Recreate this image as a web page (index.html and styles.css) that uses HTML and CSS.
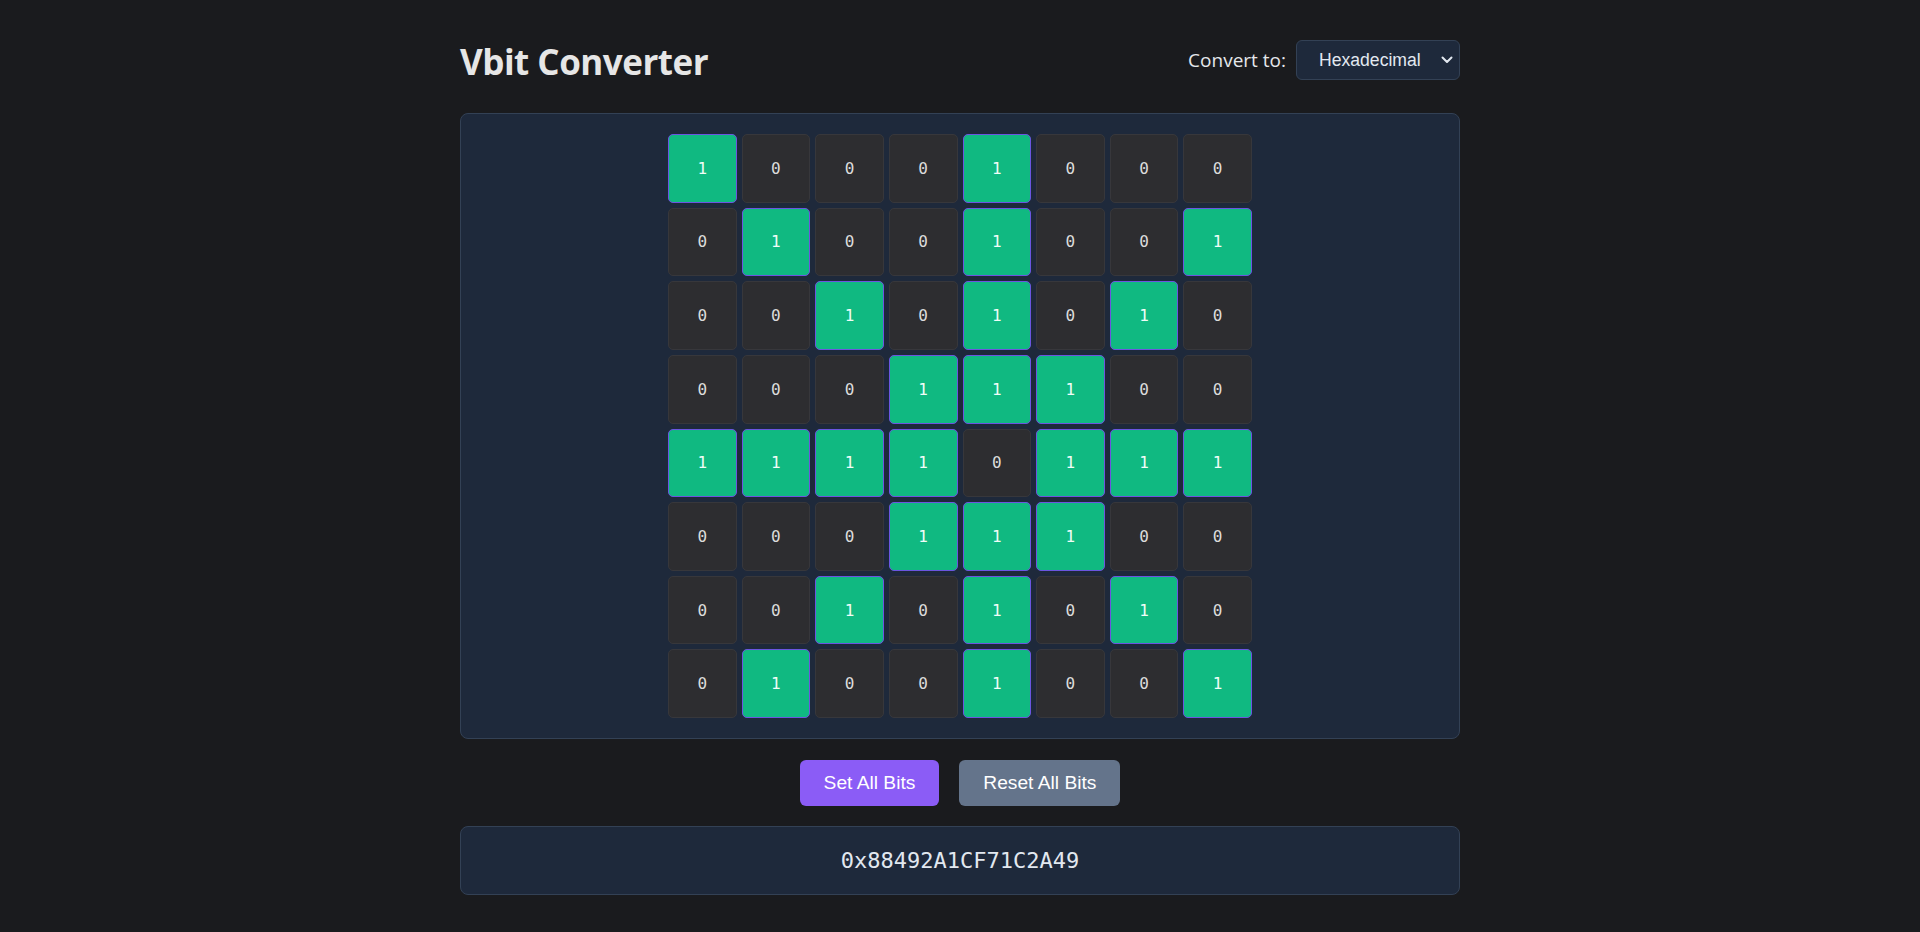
FILE: index.html
```html
<!DOCTYPE html>
<html lang="en">
<head>
<meta charset="utf-8">
<title>Vbit Converter</title>
<link rel="stylesheet" href="styles.css">
</head>
<body>
<div class="app">
  <header class="header">
    <h1 class="title">Vbit Converter</h1>
    <div class="convert">
      <label class="convert-label" for="fmt">Convert to:</label>
      <div class="select-wrap">
        <select id="fmt" class="select">
          <option>Hexadecimal</option>
          <option>Decimal</option>
          <option>Binary</option>
        </select>
        <svg class="chevron" width="12" height="8" viewBox="0 0 12 8" aria-hidden="true"><path d="M1.5 1.5 L6 6 L10.5 1.5" fill="none" stroke="#e2e8f0" stroke-width="2" stroke-linecap="round" stroke-linejoin="round"/></svg>
      </div>
    </div>
  </header>

  <section class="panel">
    <div class="grid">
      <div class="cell on">1</div><div class="cell">0</div><div class="cell">0</div><div class="cell">0</div><div class="cell on">1</div><div class="cell">0</div><div class="cell">0</div><div class="cell">0</div>
      <div class="cell">0</div><div class="cell on">1</div><div class="cell">0</div><div class="cell">0</div><div class="cell on">1</div><div class="cell">0</div><div class="cell">0</div><div class="cell on">1</div>
      <div class="cell">0</div><div class="cell">0</div><div class="cell on">1</div><div class="cell">0</div><div class="cell on">1</div><div class="cell">0</div><div class="cell on">1</div><div class="cell">0</div>
      <div class="cell">0</div><div class="cell">0</div><div class="cell">0</div><div class="cell on">1</div><div class="cell on">1</div><div class="cell on">1</div><div class="cell">0</div><div class="cell">0</div>
      <div class="cell on">1</div><div class="cell on">1</div><div class="cell on">1</div><div class="cell on">1</div><div class="cell">0</div><div class="cell on">1</div><div class="cell on">1</div><div class="cell on">1</div>
      <div class="cell">0</div><div class="cell">0</div><div class="cell">0</div><div class="cell on">1</div><div class="cell on">1</div><div class="cell on">1</div><div class="cell">0</div><div class="cell">0</div>
      <div class="cell">0</div><div class="cell">0</div><div class="cell on">1</div><div class="cell">0</div><div class="cell on">1</div><div class="cell">0</div><div class="cell on">1</div><div class="cell">0</div>
      <div class="cell">0</div><div class="cell on">1</div><div class="cell">0</div><div class="cell">0</div><div class="cell on">1</div><div class="cell">0</div><div class="cell">0</div><div class="cell on">1</div>
    </div>
  </section>

  <div class="actions">
    <button class="btn btn-set" type="button">Set All Bits</button>
    <button class="btn btn-reset" type="button">Reset All Bits</button>
  </div>

  <div class="output">0x88492A1CF71C2A49</div>
</div>
</body>
</html>
```

FILE: styles.css
```css
html, body {
  margin: 0;
  padding: 0;
}

body {
  background: #1a1b1e;
  color: #e5e7eb;
  font-family: "Open Sans", "Noto Sans", "Liberation Sans", sans-serif;
}

.app {
  width: 1000px;
  margin: 0 auto;
  padding-top: 38px;
}

.header {
  display: flex;
  justify-content: space-between;
  align-items: center;
  height: 44px;
  margin-bottom: 31px;
}

.title {
  margin: 0;
  font-size: 35px;
  line-height: 44px;
  font-weight: 700;
  color: #e6e6e6;
  letter-spacing: -0.5px;
  position: relative;
  top: 2px;
}

.convert {
  display: flex;
  align-items: center;
  gap: 10px;
}

.convert-label {
  font-size: 19px;
  color: #e5e7eb;
}

.select-wrap {
  position: relative;
}

.select {
  appearance: none;
  -webkit-appearance: none;
  width: 164px;
  height: 40px;
  padding: 0 30px 0 22px;
  background: #1e293b;
  color: #e2e8f0;
  border: 1px solid #334155;
  border-radius: 6px;
  font-family: "Liberation Sans", Arial, sans-serif;
  font-size: 17.6px;
  display: block;
}

.chevron {
  position: absolute;
  right: 7px;
  top: 16px;
  pointer-events: none;
}

.panel {
  background: #1e293b;
  border: 1px solid #334155;
  border-radius: 8px;
  padding: 20px;
  display: flex;
  justify-content: center;
}

.grid {
  width: 584px;
  display: grid;
  grid-template-columns: repeat(8, 1fr);
  gap: 5px;
}

.cell {
  aspect-ratio: 1 / 1;
  box-sizing: border-box;
  display: flex;
  align-items: center;
  justify-content: center;
  background: #2d2d30;
  border: 1px solid #37373b;
  border-radius: 5px;
  font-family: "DejaVu Sans Mono", "Liberation Mono", monospace;
  font-size: 16px;
  color: #dcdcdc;
}

.cell.on {
  background: #10b981;
  border-color: #6b55e0;
  color: #f0fdf8;
}

.actions {
  display: flex;
  justify-content: center;
  gap: 20px;
  margin-top: 21px;
}

.btn {
  height: 46px;
  padding: 0 24px;
  border: none;
  border-radius: 6px;
  color: #ffffff;
  font-family: "Liberation Sans", Arial, sans-serif;
  font-size: 19.2px;
}

.btn-set {
  background: #8b5cf6;
}

.btn-reset {
  background: #64748b;
}

.output {
  margin-top: 20px;
  background: #1e293b;
  border: 1px solid #334155;
  border-radius: 8px;
  padding: 20px;
  line-height: 27px;
  text-align: center;
  font-family: "DejaVu Sans Mono", "Liberation Mono", monospace;
  font-size: 22px;
  color: #e2e8f0;
}
```
